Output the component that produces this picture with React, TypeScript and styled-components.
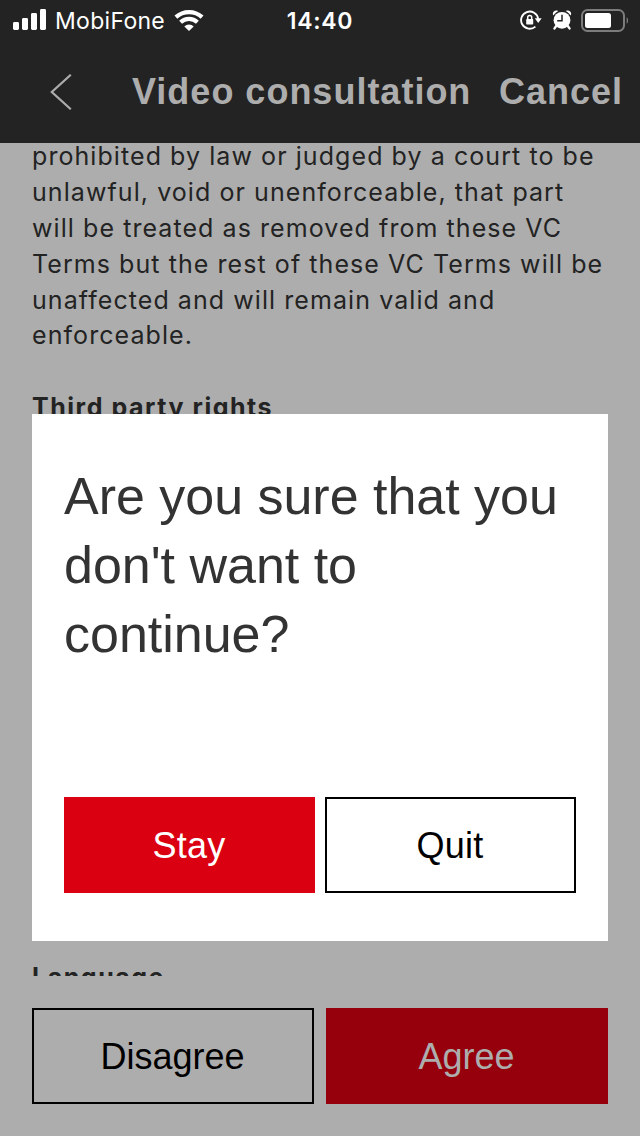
import React from "react";
import styled, { createGlobalStyle } from "styled-components";

const GlobalStyle = createGlobalStyle`
  * { box-sizing: border-box; }
  body { margin: 0; background: #adadad; }
  button { appearance: none; margin: 0; padding: 0; border-radius: 0; background: none; border: 0; }
`;

const Screen = styled.div`
  position: relative;
  width: 640px;
  height: 1136px;
  overflow: hidden;
  display: flex;
  flex-direction: column;
  background: #adadad;
  font-family: "Liberation Sans", Arial, sans-serif;
`;

const StatusBar = styled.div`
  display: grid;
  grid-template-columns: 1fr auto 1fr;
  align-items: center;
  height: 40px;
  padding: 0 11px 0 13px;
  background: #232323;
  color: #fff;
  font-family: Inter, sans-serif;
`;

const StatusGroup = styled.div<{ $end?: boolean }>`
  display: flex;
  align-items: center;
  justify-content: ${(p) => (p.$end ? "flex-end" : "flex-start")};
  svg { display: block; flex: none; }
`;

const Carrier = styled.span`
  margin: 2px 9px 0 8px;
  font-size: 23px;
  line-height: 28px;
  letter-spacing: 0.3px;
`;

const Clock = styled.span`
  margin: 2px 2px 0 0;
  font-size: 23px;
  line-height: 28px;
  font-weight: 600;
  letter-spacing: 0.7px;
`;

const NavBar = styled.div`
  display: flex;
  align-items: center;
  height: 103px;
  padding: 0 17px 0 50px;
  background: #232323;
  color: #adadad;
  font-size: 36px;
  font-weight: 700;
  letter-spacing: 1px;
  white-space: nowrap;
  svg { display: block; flex: none; }
`;

const NavTitle = styled.span`
  margin: 1px 0 0 60px;
`;

const NavAction = styled.span`
  margin: 1px 0 0 auto;
`;

const Terms = styled.div`
  height: 833px;
  overflow: hidden;
  padding: 0 32px;
  color: #232323;
  font-family: Inter, sans-serif;
  font-size: 25px;
  line-height: 35.8px;
  letter-spacing: 1.07px;
  white-space: nowrap;
`;

const Paragraph = styled.p`
  margin: -3.7px 0 35.6px;
`;

const SectionTitle = styled.h2`
  margin: 0;
  font-size: 25px;
  font-weight: 700;
  line-height: 35.8px;
  letter-spacing: 1.53px;
`;

const Section = styled.section<{ $height?: number }>`
  height: ${(p) => (p.$height ? `${p.$height}px` : "auto")};
`;

const Footer = styled.div`
  display: grid;
  grid-template-columns: 1fr 1fr;
  gap: 12px;
  padding: 32px 32px;
`;

const variants = {
  outline: { bg: "transparent", fg: "#000", border: "#000" },
  primary: { bg: "#db0011", fg: "#fff", border: "#db0011" },
  dimmed: { bg: "#95000c", fg: "#adadad", border: "#95000c" },
};

const Button = styled.button<{ $variant: keyof typeof variants; $spacing?: number }>`
  height: 96px;
  padding: 1px 1px 0 0;
  border: 2px solid ${(p) => variants[p.$variant].border};
  background: ${(p) => variants[p.$variant].bg};
  color: ${(p) => variants[p.$variant].fg};
  font-family: "Liberation Sans", Arial, sans-serif;
  font-size: 36px;
  line-height: 40px;
  letter-spacing: ${(p) => p.$spacing ?? 0}px;
`;

const Dialog = styled.div`
  position: absolute;
  top: 414px;
  left: 32px;
  width: 576px;
  height: 527px;
  display: flex;
  flex-direction: column;
  justify-content: space-between;
  padding: 48px 32px;
  background: #fff;
`;

const DialogTitle = styled.h1`
  margin: 0;
  color: #333;
  font-size: 52px;
  font-weight: 400;
  line-height: 69px;
  letter-spacing: -0.02px;
  white-space: nowrap;
`;

const DialogActions = styled.div`
  display: grid;
  grid-template-columns: 1fr 1fr;
  gap: 10px;
`;

const SignalIcon = () => (
  <svg width="34" height="22" viewBox="0 0 34 22" fill="#fff">
    <rect x="0" y="13" width="6" height="8" rx="1.4" />
    <rect x="9" y="9" width="6" height="12" rx="1.4" />
    <rect x="18" y="4" width="6" height="17" rx="1.4" />
    <rect x="27" y="0" width="6" height="21" rx="1.4" />
  </svg>
);

const WifiIcon = () => (
  <svg width="30" height="22" viewBox="0 0 30 22" fill="none" stroke="#fff" strokeWidth="4.2">
    <path d="M1.9 8.1A19.6 19.6 0 0 1 28.1 8.1" />
    <path d="M6.6 13.2A12.2 12.2 0 0 1 23.4 13.2" />
    <path d="M15 22l-4.7-4.6a6.8 6.8 0 0 1 9.4 0z" fill="#fff" stroke="none" />
  </svg>
);

const RotationLockIcon = () => (
  <svg width="22" height="22" viewBox="0 0 22 22" fill="none" stroke="#fff">
    <path d="M15.4 17.6A8.6 8.6 0 1 1 18.2 9.8" strokeWidth="1.9" />
    <path d="M14.8 9.2h6.9l-3.5 4.9z" fill="#fff" stroke="none" />
    <rect x="6.2" y="10" width="7" height="5.6" rx="0.8" fill="#fff" stroke="none" />
    <path d="M7.7 10.4V8.6a2 2 0 0 1 4 0v1.8" strokeWidth="1.5" />
  </svg>
);

const AlarmIcon = () => (
  <svg width="20" height="20" viewBox="0 0 20 20" fill="none" stroke="#fff">
    <circle cx="10" cy="10.3" r="8.4" fill="#fff" stroke="none" />
    <path d="M1.2 5.4C-.2 2.2 2.8-.8 6.2.9L3.8 2.8zM18.8 5.4c1.4-3.2-1.6-6.2-5-4.5l2.4 1.9z" fill="#fff" stroke="none" />
    <path d="M4.2 16l-1.7 2.4M15.8 16l1.7 2.4" strokeWidth="2.4" strokeLinecap="round" />
    <path d="M10 4.8v5.9H5.2" stroke="#232323" strokeWidth="1.5" />
  </svg>
);

const BatteryIcon = () => (
  <svg width="48" height="23" viewBox="0 0 48 23">
    <rect x="1" y="1" width="42" height="21" rx="5.5" fill="none" stroke="#7c7c7c" strokeWidth="2" />
    <rect x="4" y="4" width="26" height="15" rx="2.5" fill="#fff" />
    <path d="M45.6 8.2c2 1 2 5.6 0 6.6z" fill="#7c7c7c" />
  </svg>
);

const BackIcon = () => (
  <svg width="22" height="36" viewBox="0 0 22 36" fill="none" stroke="#adadad" strokeWidth="2.2">
    <path d="M20.8 0.8L1.8 18l19 17.2" />
  </svg>
);

const SpacedIcon = styled.span<{ $gap: number }>`
  margin-right: ${(p) => p.$gap}px;
`;

export default function App() {
  return (
    <>
      <GlobalStyle />
      <Screen>
        <StatusBar>
          <StatusGroup>
            <SignalIcon />
            <Carrier>MobiFone</Carrier>
            <WifiIcon />
          </StatusGroup>
          <Clock>14:40</Clock>
          <StatusGroup $end>
            <SpacedIcon $gap={10}><RotationLockIcon /></SpacedIcon>
            <SpacedIcon $gap={9}><AlarmIcon /></SpacedIcon>
            <BatteryIcon />
          </StatusGroup>
        </StatusBar>
        <NavBar>
          <BackIcon />
          <NavTitle>Video consultation</NavTitle>
          <NavAction>Cancel</NavAction>
        </NavBar>
        <Terms>
          <Paragraph>
            prohibited by law or judged by a court to be<br />
            unlawful, void or unenforceable, that part<br />
            will be treated as removed from these VC<br />
            Terms but the rest of these VC Terms will be<br />
            unaffected and will remain valid and<br />
            enforceable.
          </Paragraph>
          <Section $height={570}>
            <SectionTitle>Third party rights</SectionTitle>
          </Section>
          <Section>
            <SectionTitle>Language</SectionTitle>
          </Section>
        </Terms>
        <Footer>
          <Button $variant="outline">Disagree</Button>
          <Button $variant="dimmed">Agree</Button>
        </Footer>
        <Dialog role="dialog">
          <DialogTitle>
            Are you sure that you<br />
            don't want to<br />
            continue?
          </DialogTitle>
          <DialogActions>
            <Button $variant="primary" $spacing={0.3}>Stay</Button>
            <Button $variant="outline" $spacing={0.3}>Quit</Button>
          </DialogActions>
        </Dialog>
      </Screen>
    </>
  );
}
